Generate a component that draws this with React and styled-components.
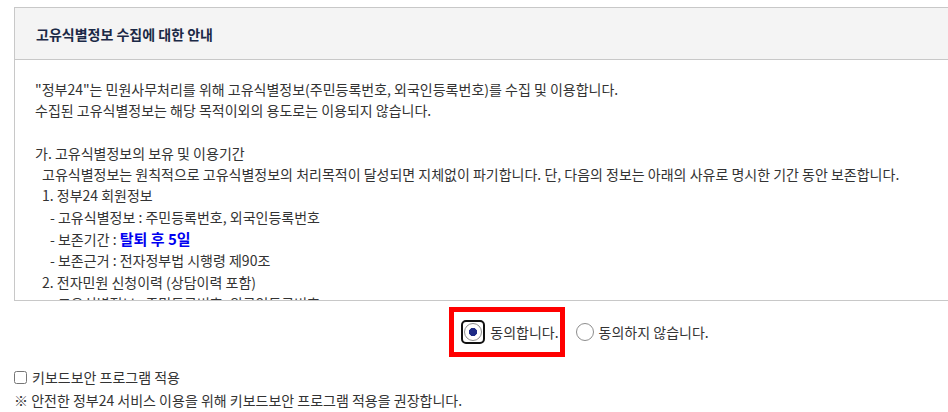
import React from "react";
import styled, { createGlobalStyle } from "styled-components";

const GlobalStyle = createGlobalStyle`
  html, body {
    margin: 0;
    overflow: hidden;
    background: #fff;
  }
  body {
    font-family: "Noto Sans CJK KR", "Noto Sans", sans-serif;
    font-size: 14px;
    color: #333;
  }
`;

const Page = styled.div`
  padding: 7px 0 0 14px;
  width: 1135px;
`;

const Box = styled.section`
  border: 1px solid #c8c8c8;
  background: #fff;
`;

const BoxHeader = styled.h3`
  margin: 0;
  height: 51px;
  padding: 0 21px;
  display: flex;
  align-items: center;
  background: #f4f4f4;
  border-bottom: 1px solid #c8c8c8;
  font-size: 14px;
  font-weight: 700;
  color: #1b2946;
`;

const BoxBody = styled.div`
  height: 240px;
  box-sizing: border-box;
  overflow: hidden;
  padding: 19px 20px 0 20px;
  line-height: 21.3px;
`;

const Line = styled.div`
  padding-left: ${(p) => p.$indent || 0}px;
  min-height: 21.3px;
  white-space: nowrap;
`;

const Strong = styled.b`
  color: #0000f0;
  font-size: 15px;
  font-weight: 700;
`;

const RadioRow = styled.div`
  display: flex;
  justify-content: center;
  align-items: center;
  margin-top: 6px;
  height: 50px;
`;

const Option = styled.label`
  display: flex;
  align-items: center;
  gap: 5px;
  box-sizing: border-box;
  height: 50px;
  padding: ${(p) => (p.$highlight ? "0 1px 0 10px" : "0 0 0 6px")};
  border: 5px solid ${(p) => (p.$highlight ? "#ff0000" : "transparent")};
  cursor: pointer;
`;

const Radio = styled.input.attrs({ type: "radio" })`
  appearance: none;
  margin: 0;
  width: 18px;
  height: 18px;
  border-radius: 50%;
  border: 1px solid #8d8d8d;
  background: #fff;
  box-sizing: border-box;
  &:checked {
    background: radial-gradient(circle, #1d2a86 0 3.8px, #fff 4.4px);
  }
  &:focus-visible {
    outline: 2px solid #111;
  }
`;

const FocusRing = styled.span`
  display: inline-flex;
  padding: 1px;
  border: 2px solid #111;
  border-radius: 5px;
  margin-left: -3px;
`;

const Bottom = styled.div`
  padding-left: 14px;
`;

const CheckRow = styled.label`
  display: flex;
  align-items: center;
  gap: 5px;
  margin-top: 13px;
  height: 14px;
`;

const Check = styled.input.attrs({ type: "checkbox" })`
  margin: 0;
  width: 13px;
  height: 13px;
`;

const Notice = styled.p`
  margin: 6px 0 0;
  line-height: 20px;
`;

export default function App() {
  return (
    <>
      <GlobalStyle />
      <Page>
        <Box>
          <BoxHeader>고유식별정보 수집에 대한 안내</BoxHeader>
          <BoxBody>
            <Line>"정부24"는 민원사무처리를 위해 고유식별정보(주민등록번호, 외국인등록번호)를 수집 및 이용합니다.</Line>
            <Line>수집된 고유식별정보는 해당 목적이외의 용도로는 이용되지 않습니다.</Line>
            <Line />
            <Line>가. 고유식별정보의 보유 및 이용기간</Line>
            <Line $indent={7}>
              고유식별정보는 원칙적으로 고유식별정보의 처리목적이 달성되면 지체없이 파기합니다. 단, 다음의 정보는 아래의 사유로 명시한 기간 동안 보존합니다.
            </Line>
            <Line $indent={7}>1. 정부24 회원정보</Line>
            <Line $indent={15}>- 고유식별정보 : 주민등록번호, 외국인등록번호</Line>
            <Line $indent={15}>
              - 보존기간 : <Strong>탈퇴 후 5일</Strong>
            </Line>
            <Line $indent={15}>- 보존근거 : 전자정부법 시행령 제90조</Line>
            <Line $indent={7}>2. 전자민원 신청이력 (상담이력 포함)</Line>
            <Line $indent={15}>- 고유식별정보 : 주민등록번호, 외국인등록번호</Line>
          </BoxBody>
        </Box>

        <RadioRow>
          <Option $highlight>
            <FocusRing>
              <Radio name="agree" defaultChecked />
            </FocusRing>
            동의합니다.
          </Option>
          <Option>
            <Radio name="agree" />
            동의하지 않습니다.
          </Option>
        </RadioRow>
      </Page>
      <Bottom>
        <CheckRow>
          <Check />
          키보드보안 프로그램 적용
        </CheckRow>
        <Notice>※ 안전한 정부24 서비스 이용을 위해 키보드보안 프로그램 적용을 권장합니다.</Notice>
      </Bottom>
    </>
  );
}
